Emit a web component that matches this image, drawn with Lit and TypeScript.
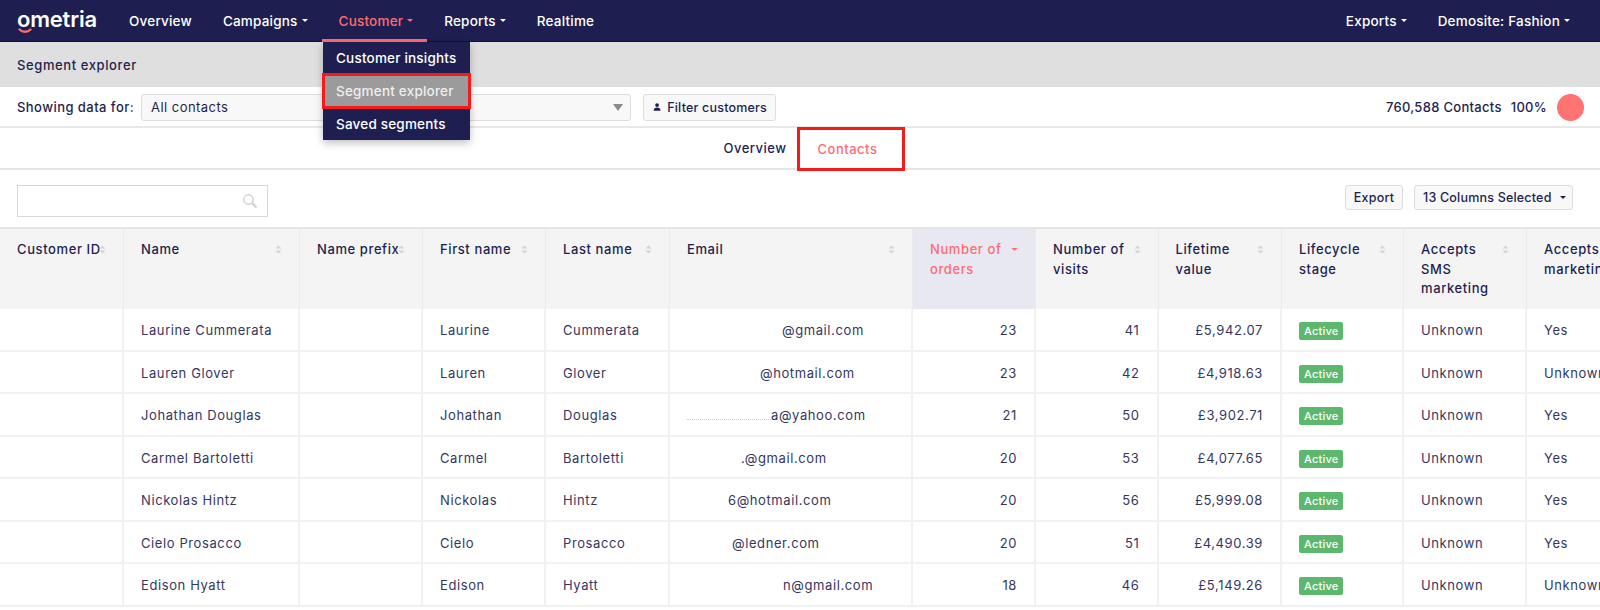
import { LitElement, html, css } from "lit";
import { customElement } from "lit/decorators.js";

const columns = [
  { label: "Customer ID" },
  { label: "Name" },
  { label: "Name prefix" },
  { label: "First name" },
  { label: "Last name" },
  { label: "Email" },
  { label: "Number of orders", active: true },
  { label: "Number of visits" },
  { label: "Lifetime value" },
  { label: "Lifecycle stage" },
  { label: "Accepts SMS marketing" },
  { label: "Accepts marketing" },
];

const customers = [
  { first: "Laurine", last: "Cummerata", email: "@gmail.com", gap: 112, orders: 23, visits: 41, value: "£5,942.07", sms: "Unknown", mkt: "Yes" },
  { first: "Lauren", last: "Glover", email: "@hotmail.com", gap: 90, orders: 23, visits: 42, value: "£4,918.63", sms: "Unknown", mkt: "Unknown" },
  { first: "Johathan", last: "Douglas", email: "a@yahoo.com", gap: 17, specks: 84, orders: 21, visits: 50, value: "£3,902.71", sms: "Unknown", mkt: "Yes" },
  { first: "Carmel", last: "Bartoletti", email: ".@gmail.com", gap: 71, orders: 20, visits: 53, value: "£4,077.65", sms: "Unknown", mkt: "Yes" },
  { first: "Nickolas", last: "Hintz", email: "6@hotmail.com", gap: 58, orders: 20, visits: 56, value: "£5,999.08", sms: "Unknown", mkt: "Yes" },
  { first: "Cielo", last: "Prosacco", email: "@ledner.com", gap: 62, orders: 20, visits: 51, value: "£4,490.39", sms: "Unknown", mkt: "Yes" },
  { first: "Edison", last: "Hyatt", email: "n@gmail.com", gap: 113, orders: 18, visits: 46, value: "£5,149.26", sms: "Unknown", mkt: "Unknown" },
];

@customElement("app-root")
export class AppRoot extends LitElement {
  static styles = css`
    :host {
      display: block;
      position: relative;
      height: 610px;
      overflow: hidden;
      background: #fff;
      color: #1e1f50;
      font-family: Inter, "Noto Sans", sans-serif;
      font-size: 13px;
      letter-spacing: 0.6px;
    }
    .caret {
      display: inline-block;
      margin-left: 4px;
      vertical-align: middle;
      border-left: 3px solid transparent;
      border-right: 3px solid transparent;
      border-top: 3px solid currentColor;
    }

    /* top nav */
    .nav {
      display: flex;
      align-items: center;
      height: 42px;
      box-sizing: border-box;
      padding-left: 17px;
      background: #1e1f50;
      border-bottom: 1px solid #11122f;
      color: #fff;
      font-size: 13.5px;
      font-weight: 500;
      letter-spacing: 0.2px;
    }
    .logo {
      position: relative;
      width: 95px;
      margin-bottom: 4px;
      font-size: 22px;
      font-weight: 600;
      letter-spacing: -0.2px;
      line-height: 42px;
    }
    .smile {
      position: absolute;
      left: 1px;
      top: 30px;
    }
    .nav-item {
      display: flex;
      align-items: center;
      height: 42px;
      padding: 0 14px 0 17px;
      white-space: nowrap;
    }
    .nav-item.current {
      color: #ff6b6f;
      box-shadow: inset 0 -3px 0 #ff6b6f;
    }
    .nav-item.site {
      padding-right: 30px;
    }
    .nav-space {
      flex: 1;
    }

    .menu {
      position: absolute;
      left: 323px;
      top: 42px;
      width: 147px;
      height: 98px;
      background: #1e1f50;
      color: #fff;
      font-size: 13.5px;
      font-weight: 500;
      letter-spacing: 0.2px;
      box-shadow: 0 3px 8px rgba(0, 0, 0, 0.25);
    }
    .menu-item {
      display: flex;
      align-items: center;
      height: 32px;
      padding-left: 13px;
      white-space: nowrap;
    }
    .menu-item.hover {
      box-sizing: border-box;
      margin: -1px -1px;
      height: 36px;
      padding-left: 11px;
      background: #9b9b9b;
      border: 3px solid #f61a1a;
      color: #eee;
    }

    .subhead {
      display: flex;
      align-items: center;
      height: 45px;
      padding-left: 17px;
      background: #dfdfdf;
      font-weight: 500;
    }

    .filters {
      display: flex;
      align-items: center;
      height: 41px;
      box-sizing: border-box;
      padding: 1px 16px 0 17px;
      border-bottom: 2px solid #e8e8e8;
      font-weight: 500;
      letter-spacing: 0.45px;
    }
    .select {
      display: flex;
      align-items: center;
      justify-content: space-between;
      box-sizing: border-box;
      width: 490px;
      height: 27px;
      margin-left: 7px;
      padding: 0 7px 0 9px;
      background: #f8f8f8;
      border: 1px solid #ddd;
      border-radius: 3px;
      font-weight: 400;
    }
    .select-arrow {
      border-left: 5px solid transparent;
      border-right: 5px solid transparent;
      border-top: 7px solid #8a8a8a;
    }
    .btn {
      display: inline-flex;
      align-items: center;
      box-sizing: border-box;
      height: 27px;
      padding: 0 8px;
      background: #f8f8f8;
      border: 1px solid #ddd;
      border-radius: 3px;
      font-size: 12.5px;
      font-weight: 500;
      letter-spacing: 0.2px;
      white-space: nowrap;
    }
    .filter-btn {
      width: 133px;
      margin-left: 12px;
      padding-left: 9px;
    }
    .filter-btn svg {
      margin-right: 6px;
    }
    .stats {
      display: flex;
      align-items: center;
      margin-left: auto;
      letter-spacing: 0.3px;
    }
    .stats span + span {
      margin-left: 9px;
    }
    .dot {
      width: 27px;
      height: 27px;
      margin-left: 10px;
      border-radius: 50%;
      background: #ff7373;
    }

    .tabs {
      display: flex;
      justify-content: center;
      align-items: center;
      height: 42px;
      box-sizing: border-box;
      padding-left: 14px;
      border-bottom: 2px solid #e5e5e5;
      font-weight: 500;
      letter-spacing: 0.5px;
    }
    .tab {
      padding: 0 10px 0 14px;
    }
    .tab.current {
      box-sizing: border-box;
      display: flex;
      align-items: center;
      width: 108px;
      height: 44px;
      margin: -1px 0 -3px;
      padding: 0 0 0 18px;
      border: 3px solid #f61a1a;
      color: #ff6b6f;
    }

    .toolbar {
      display: flex;
      align-items: flex-start;
      height: 57px;
      box-sizing: border-box;
      padding: 15px 27px 0 17px;
    }
    .search {
      display: flex;
      align-items: center;
      justify-content: flex-end;
      box-sizing: border-box;
      width: 251px;
      height: 32px;
      padding-right: 9px;
      border: 1px solid #d8d8d8;
    }
    .export {
      margin-left: auto;
      width: 58px;
      justify-content: center;
      padding: 0;
      height: 25px;
    }
    .cols {
      width: 159px;
      height: 25px;
      margin-left: 11px;
    }
    .cols .caret {
      margin-left: 8px;
    }

    .table {
      width: 1650px;
      border-top: 2px solid #e5e5e5;
    }
    .row {
      display: grid;
      grid-template-columns: 124px 176px 123px 123px 124px 243px 123px 122.5px 123.5px 122px 123px 123px;
    }
    .row.head {
      height: 80px;
      background: #f4f4f4;
      font-weight: 500;
      line-height: 19.5px;
    }
    .head .cell {
      display: flex;
      justify-content: space-between;
      align-items: flex-start;
      padding: 11px 17px 0;
      border-right: 1px solid #ebebeb;
    }
    .head .cell.active {
      background: #e8e8f3;
      color: #ff6b6f;
    }
    .sort {
      flex: none;
      margin: 5px 0 0 -4px;
    }
    .row.body {
      height: 42.5px;
      box-sizing: border-box;
      border-bottom: 2px solid #f1f1f1;
      color: #35365f;
      line-height: 43px;
    }
    .body .cell {
      box-sizing: border-box;
      padding: 0 17px;
      border-right: 2px solid #f1f1f1;
      white-space: nowrap;
    }
    .body .cell.num {
      text-align: right;
    }
    .specks {
      display: inline-block;
      vertical-align: baseline;
      border-bottom: 1px dotted #cfcfdb;
    }
    .badge {
      display: inline-block;
      padding: 0 5px;
      height: 18px;
      margin-top: 13px;
      vertical-align: top;
      line-height: 18px;
      background: #5cb86c;
      border-radius: 2px;
      color: #fff;
      font-size: 11px;
      font-weight: 500;
      letter-spacing: 0.2px;
    }
  `;

  private caret() {
    return html`<span class="caret"></span>`;
  }

  private sortIcon(active?: boolean) {
    if (active) {
      return html`<svg class="sort" width="7" height="9" viewBox="0 0 7 9"><path d="M0.5 3h6l-3 3z" fill="#ff6b6f"/></svg>`;
    }
    return html`<svg class="sort" width="7" height="9" viewBox="0 0 7 9"><path d="M0.5 3.5h6l-3-3zM0.5 5.5h6l-3 3z" fill="#d2d2d2"/></svg>`;
  }

  private renderHead() {
    return html`<div class="row head">
      ${columns.map(
        (c) => html`<div class="cell ${c.active ? "active" : ""}"><span>${c.label}</span>${this.sortIcon(c.active)}</div>`
      )}
    </div>`;
  }

  private renderRow(c: (typeof customers)[number]) {
    return html`<div class="row body">
      <div class="cell"></div>
      <div class="cell">${c.first} ${c.last}</div>
      <div class="cell"></div>
      <div class="cell">${c.first}</div>
      <div class="cell">${c.last}</div>
      <div class="cell" style="padding-left:${c.gap}px">${c.specks ? html`<span class="specks" style="width:${c.specks}px"></span>` : ""}${c.email}</div>
      <div class="cell num">${c.orders}</div>
      <div class="cell num">${c.visits}</div>
      <div class="cell num">${c.value}</div>
      <div class="cell"><span class="badge">Active</span></div>
      <div class="cell">${c.sms}</div>
      <div class="cell">${c.mkt}</div>
    </div>`;
  }

  render() {
    return html`
      <div class="nav">
        <div class="logo">
          ometria
          <svg class="smile" width="14" height="6" viewBox="0 0 14 6"><path d="M1.5 1.5c3 3 8 3 11 0" fill="none" stroke="#ff6b6f" stroke-width="2.4" stroke-linecap="round"/></svg>
        </div>
        <div class="nav-item">Overview</div>
        <div class="nav-item">Campaigns${this.caret()}</div>
        <div class="nav-item current">Customer${this.caret()}</div>
        <div class="nav-item">Reports${this.caret()}</div>
        <div class="nav-item">Realtime</div>
        <div class="nav-space"></div>
        <div class="nav-item">Exports${this.caret()}</div>
        <div class="nav-item site">Demosite: Fashion${this.caret()}</div>
      </div>

      <div class="subhead">Segment explorer</div>

      <div class="filters">
        <span>Showing data for:</span>
        <div class="select"><span>All contacts</span><span class="select-arrow"></span></div>
        <div class="btn filter-btn">
          <svg width="10" height="10" viewBox="0 0 10 10"><circle cx="5" cy="2.6" r="2.3" fill="#1e1f50"/><path d="M0.8 9.5c0-2.6 1.8-4 4.2-4s4.2 1.4 4.2 4z" fill="#1e1f50"/></svg>
          Filter customers
        </div>
        <div class="stats">
          <span>760,588 Contacts</span>
          <span>100%</span>
          <div class="dot"></div>
        </div>
      </div>

      <div class="tabs">
        <div class="tab">Overview</div>
        <div class="tab current">Contacts</div>
      </div>

      <div class="toolbar">
        <div class="search">
          <svg width="16" height="16" viewBox="0 0 16 16" fill="none" stroke="#d0d0d0"><circle cx="6.5" cy="6.5" r="4.7" stroke-width="1.4"/><path d="M10 10l4.5 4.5" stroke-width="2"/></svg>
        </div>
        <div class="btn export">Export</div>
        <div class="btn cols">13 Columns Selected${this.caret()}</div>
      </div>

      <div class="table">
        ${this.renderHead()}
        ${customers.map((c) => this.renderRow(c))}
      </div>

      <div class="menu">
        <div class="menu-item">Customer insights</div>
        <div class="menu-item hover">Segment explorer</div>
        <div class="menu-item">Saved segments</div>
      </div>
    `;
  }
}
